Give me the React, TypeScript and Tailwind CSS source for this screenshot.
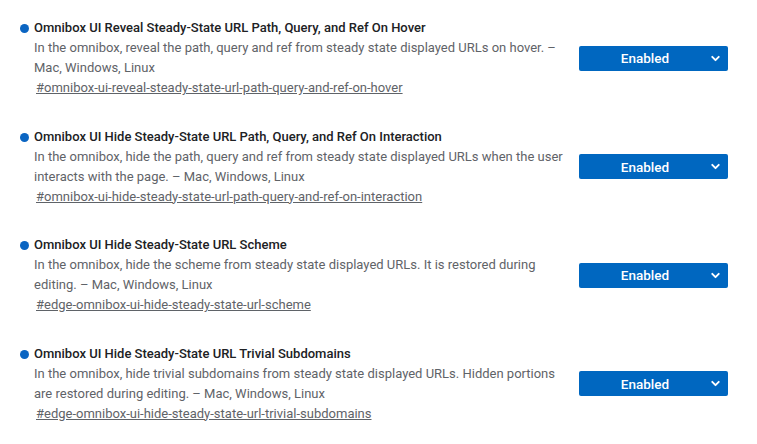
import React from 'react';
import { ChevronDown } from 'lucide-react';

const flags = [
  {
    title: 'Omnibox UI Reveal Steady-State URL Path, Query, and Ref On Hover',
    desc: 'In the omnibox, reveal the path, query and ref from steady state displayed URLs on hover. – Mac, Windows, Linux',
    tag: '#omnibox-ui-reveal-steady-state-url-path-query-and-ref-on-hover',
  },
  {
    title: 'Omnibox UI Hide Steady-State URL Path, Query, and Ref On Interaction',
    desc: 'In the omnibox, hide the path, query and ref from steady state displayed URLs when the user interacts with the page. – Mac, Windows, Linux',
    tag: '#omnibox-ui-hide-steady-state-url-path-query-and-ref-on-interaction',
  },
  {
    title: 'Omnibox UI Hide Steady-State URL Scheme',
    desc: 'In the omnibox, hide the scheme from steady state displayed URLs. It is restored during editing. – Mac, Windows, Linux',
    tag: '#edge-omnibox-ui-hide-steady-state-url-scheme',
  },
  {
    title: 'Omnibox UI Hide Steady-State URL Trivial Subdomains',
    desc: 'In the omnibox, hide trivial subdomains from steady state displayed URLs. Hidden portions are restored during editing. – Mac, Windows, Linux',
    tag: '#edge-omnibox-ui-hide-steady-state-url-trivial-subdomains',
  },
];

export default function App() {
  return (
    <div className="min-h-screen bg-white pt-[18px] font-['Roboto',sans-serif] text-[13px] leading-5">
      {flags.map((f) => (
        <div key={f.tag} className="flex items-center mb-[28.5px]">
          <div className="w-[563px] flex">
            <div className="w-[34px] flex justify-end pr-[5px] pt-[6px]">
              <span className="block w-[9px] h-[9px] rounded-full bg-[#0b65c2]" />
            </div>
            <div className="flex-1">
              <div className="font-medium text-[#202124]">{f.title}</div>
              <div className="text-[#5f6368]">{f.desc}</div>
              <a className="ml-[2px] text-[#5f6368] underline">{f.tag}</a>
            </div>
          </div>
          <div className="ml-[16px] w-[149px] h-[25px] rounded-[2px] bg-[#0067c0] text-white text-[13.5px] font-medium flex items-center">
            <span className="flex-1 text-center pl-[2px]">Enabled</span>
            <ChevronDown className="w-[13px] h-[13px] mr-[6px]" strokeWidth={3.5} />
          </div>
        </div>
      ))}
    </div>
  );
}
